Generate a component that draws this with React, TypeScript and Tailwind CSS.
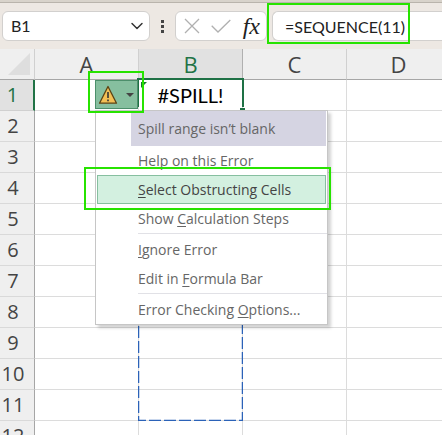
import React, { useState } from 'react';
import { ChevronDown } from 'lucide-react';

const COLUMNS = ['A', 'B', 'C', 'D'];
const ROWS = [1, 2, 3, 4, 5, 6, 7, 8, 9, 10, 11, 12];

type MenuEntry = {
  before: string;
  key: string;
  after: string;
  selected?: boolean;
  divider?: boolean;
};

const MENU: MenuEntry[] = [
  { before: '', key: 'H', after: 'elp on this Error' },
  { before: '', key: 'S', after: 'elect Obstructing Cells', selected: true },
  { before: 'Show ', key: 'C', after: 'alculation Steps', divider: true },
  { before: '', key: 'I', after: 'gnore Error' },
  { before: 'Edit in ', key: 'F', after: 'ormula Bar', divider: true },
  { before: 'Error Checking ', key: 'O', after: 'ptions...' },
];

function FormulaBar() {
  const [formula, setFormula] = useState('=SEQUENCE(11)');

  return (
    <div className="flex items-center h-[46px] pl-0.5 pb-2 pt-2 font-[Lato,sans-serif] text-base text-[#222]">
      {/* Name box */}
      <div className="flex items-center shrink-0 w-[148px] h-[30px] pl-2 pr-0.5 bg-white border border-[#d2d0ce] rounded-md">
        <input aria-label="Name box" defaultValue="B1" className="min-w-0 flex-1 bg-transparent outline-none" />
        <button aria-label="Open name list">
          <ChevronDown className="w-5 h-5 text-[#333]" strokeWidth={1.75} />
        </button>
      </div>

      <div className="flex flex-col items-center gap-0.5 w-[25px] shrink-0">
        <span className="w-[3px] h-[3px] bg-[#444]" />
        <span className="w-[3px] h-[3px] bg-[#444]" />
        <span className="w-[3px] h-[3px] bg-[#444]" />
      </div>

      {/* Cancel, enter, insert function */}
      <div className="flex items-center justify-between shrink-0 w-[92px] h-[30px] pl-2 pr-1.5 bg-white border border-[#d2d0ce] rounded-md">
        <button aria-label="Cancel">
          <svg viewBox="0 0 16 16" className="w-4 h-4" aria-hidden="true">
            <path d="M1 1 15 15M15 1 1 15" fill="none" stroke="#b0b0b0" strokeWidth="1.3" />
          </svg>
        </button>
        <button aria-label="Enter">
          <svg viewBox="0 0 20 14" className="w-5 h-3.5" aria-hidden="true">
            <path d="M.7 6.8 7 13 19.3 1" fill="none" stroke="#b0b0b0" strokeWidth="1.3" />
          </svg>
        </button>
        <button
          aria-label="Insert function"
          className="font-['Liberation_Serif',serif] italic text-2xl leading-6 text-[#222]"
        >
          fx
        </button>
      </div>

      <div className="relative flex-1 min-w-0 ml-[5px] h-[30px]">
        <input
          aria-label="Formula"
          value={formula}
          onChange={(e) => setFormula(e.target.value)}
          className="w-full h-full pl-3 bg-white border border-r-0 border-[#d2d0ce] rounded-l-md outline-none"
        />
        <div className="absolute -left-[5px] -top-[8px] w-[143px] h-[41px] border-2 border-[#27e300] pointer-events-none" />
      </div>
    </div>
  );
}

function WarningIcon() {
  return (
    <svg viewBox="0 0 20 20" className="w-5 h-5" aria-hidden="true">
      <path d="M10 1.5 18.5 18.2H1.5Z" fill="#f3c056" stroke="#5b4314" strokeWidth="1.3" strokeLinejoin="round" />
      <path d="M10 7v6M10 14.5v1.8" stroke="#333" strokeWidth="1.6" />
    </svg>
  );
}

function ErrorMenu() {
  return (
    <div className="absolute left-[-44px] top-[30px] z-20 w-[233px] bg-white border border-[#c6c6c6] shadow-[3px_3px_3px_rgba(0,0,0,0.18)] font-['Open_Sans',sans-serif] text-sm text-[#666] text-left">
      <p className="ml-[35px] mr-px h-[35px] pl-[7px] leading-[35px] bg-[#d5d4e2]">Spill range isn’t blank</p>
      <ul role="menu">
        {MENU.map((item) => (
          <li key={item.after} role="none" className="relative">
            <button
              role="menuitem"
              className={
                item.selected
                  ? 'block w-[229px] h-[29px] mx-px pl-10 text-left border border-[#86bfa0] bg-[#d3f0e0] text-[#444]'
                  : 'block w-full h-[29px] pl-[42px] text-left'
              }
            >
              {item.before}
              <u className="underline-offset-2">{item.key}</u>
              {item.after}
            </button>
            {item.divider && <div className="ml-[42px] h-px mb-px bg-[#e1e1e6]" />}
            {item.selected && (
              <div className="absolute -left-3 -top-2 w-[247px] h-[43px] border-2 border-[#27e300] pointer-events-none" />
            )}
          </li>
        ))}
      </ul>
    </div>
  );
}

function SpillCell() {
  return (
    <div className="relative h-[30px] leading-[30px] text-center font-[Lato,sans-serif] text-xl text-black">
      #SPILL!

      {/* Outline of the range the formula wants to fill */}
      <svg className="absolute -left-px top-0 w-[105px] h-[341px] pointer-events-none" aria-hidden="true">
        <path d="M.5 36V340.5H104.5V36" fill="none" stroke="#2b62b8" strokeWidth="1.5" strokeDasharray="12 3" />
      </svg>

      {/* Active cell frame with its error flag */}
      <div className="absolute -left-[2px] -top-[2px] w-[107px] h-[29px] border-2 border-b-0 border-[#1e7145] pointer-events-none" />
      <span className="absolute -right-[3px] top-[28px] w-[5px] h-[5px] bg-[#1e7145]" />
      <svg viewBox="0 0 6 6" className="absolute left-0.5 top-0.5 w-1.5 h-1.5" aria-hidden="true">
        <path d="M0 0H6L0 6Z" fill="#147a2c" />
      </svg>

      <button
        aria-label="Error options"
        className="absolute left-[-44px] top-0 z-10 flex items-center gap-2 w-[43px] h-[29px] pl-0.5 bg-[#86bf9f] border border-[#4c8f6b]"
      >
        <WarningIcon />
        <svg viewBox="0 0 8 4" className="w-2 h-1" aria-hidden="true">
          <path d="M0 0H8L4 4Z" fill="#444" />
        </svg>
      </button>

      <ErrorMenu />
      <div className="absolute left-[-51px] -top-[9px] z-30 w-14 h-[42px] border-2 border-[#27e300] pointer-events-none" />
    </div>
  );
}

function Sheet() {
  return (
    <table className="w-full min-w-[451px] table-fixed border-separate border-spacing-0 font-['Open_Sans',sans-serif] text-[#444]">
      <colgroup>
        <col className="w-[35px]" />
        <col />
        <col />
        <col />
        <col />
      </colgroup>
      <thead>
        <tr className="h-[31px] text-[22px]">
          <th aria-label="Select all" className="p-0 bg-[#efefef] border-b border-r border-b-[#a6a6a6] border-r-[#d0d0d0]">
            <svg viewBox="0 0 22 22" className="w-[22px] h-[22px] ml-2" aria-hidden="true">
              <path d="M22 0V22H0Z" fill="#dedede" />
            </svg>
          </th>
          {COLUMNS.map((col) => (
            <th
              key={col}
              scope="col"
              className={
                col === 'B'
                  ? 'p-0 leading-[30px] font-normal bg-[#e1e1e1] text-[#217346] border-b border-r border-b-[#217346] border-r-[#b0b0b0]'
                  : 'p-0 leading-[30px] font-normal bg-[#efefef] border-b border-r border-b-[#a6a6a6] border-r-[#d0d0d0]'
              }
            >
              {col}
            </th>
          ))}
        </tr>
      </thead>
      <tbody>
        {ROWS.map((row) => (
          <tr key={row} className="h-[31px] text-xl">
            <th
              scope="row"
              className={
                row === 1
                  ? 'p-0 pr-2 leading-[30px] font-normal bg-[#e1e1e1] text-[#217346] border-b border-b-[#d0d0d0] border-r-2 border-r-[#217346]'
                  : 'p-0 pr-2 leading-[30px] font-normal bg-[#efefef] border-b border-b-[#d9d9d9] border-r border-r-[#a6a6a6]'
              }
            >
              {row}
            </th>
            {COLUMNS.map((col) => (
              <td
                key={col}
                className={
                  col === 'B' && row < 11
                    ? 'p-0 border-b border-r border-[#dcdcdc]'
                    : 'p-0 border-b border-r border-[#dcdcdc] bg-white'
                }
              >
                {col === 'B' && row === 1 && <SpillCell />}
              </td>
            ))}
          </tr>
        ))}
      </tbody>
    </table>
  );
}

export default function App() {
  return (
    <div className="h-screen overflow-hidden bg-white">
      <header className="bg-[#ede8e3]">
        <div className="h-[3px] bg-[#d8d3cb] border-b border-[#b9b4ac]" />
        <FormulaBar />
      </header>
      <main>
        <Sheet />
      </main>
    </div>
  );
}
